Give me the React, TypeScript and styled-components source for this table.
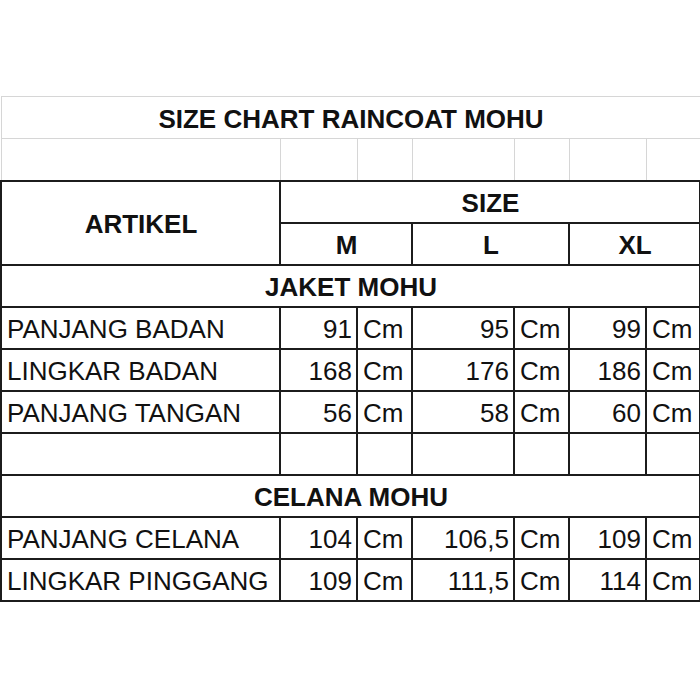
import React, { ReactElement } from 'react';
import styled, { createGlobalStyle } from 'styled-components';

const GlobalStyle = createGlobalStyle`
  html, body {
    margin: 0;
    padding: 0;
    background: #fff;
  }
  body {
    font-family: "Liberation Sans", Arial, sans-serif;
    color: #111;
  }
`;

const Page = styled.div`
  width: 700px;
  padding-top: 96px;
`;

const Table = styled.table`
  border-collapse: collapse;
  table-layout: fixed;
  width: 699px;
  font-size: 26px;
  line-height: 1;
`;

const Row = styled.tr`
  height: 42px;
`;

const Cell = styled.td<{ $align?: 'left' | 'right' | 'center'; $bold?: boolean; $light?: boolean }>`
  border: ${(p) => (p.$light ? '1px solid #d6d6d6' : '2px solid #1c1c1c')};
  padding: 3px 4px 0 5px;
  text-align: ${(p) => p.$align || 'left'};
  font-weight: ${(p) => (p.$bold ? 700 : 400)};
  vertical-align: middle;
  white-space: nowrap;
  overflow: hidden;
`;

const columns = [279, 77, 55, 102, 55, 77, 54];

type Measure = { label: string; m: string; l: string; xl: string };

const jaket: Measure[] = [
  { label: 'PANJANG BADAN', m: '91', l: '95', xl: '99' },
  { label: 'LINGKAR BADAN', m: '168', l: '176', xl: '186' },
  { label: 'PANJANG TANGAN', m: '56', l: '58', xl: '60' },
];

const celana: Measure[] = [
  { label: 'PANJANG CELANA', m: '104', l: '106,5', xl: '109' },
  { label: 'LINGKAR PINGGANG', m: '109', l: '111,5', xl: '114' },
];

function MeasureRow({ item }: { item: Measure }): ReactElement {
  return (
    <Row>
      <Cell>{item.label}</Cell>
      {[item.m, item.l, item.xl].map((v, i) => (
        <React.Fragment key={i}>
          <Cell $align="right">{v}</Cell>
          <Cell>Cm</Cell>
        </React.Fragment>
      ))}
    </Row>
  );
}

export default function App(): ReactElement {
  return (
    <Page>
      <GlobalStyle />
      <Table>
        <colgroup>
          {columns.map((w, i) => (
            <col key={i} style={{ width: w }} />
          ))}
        </colgroup>
        <tbody>
          <Row>
            <Cell colSpan={7} $align="center" $bold $light>
              SIZE CHART RAINCOAT MOHU
            </Cell>
          </Row>
          <Row>
            {columns.map((_, i) => (
              <Cell key={i} $light />
            ))}
          </Row>
          <Row>
            <Cell rowSpan={2} $align="center" $bold>
              ARTIKEL
            </Cell>
            <Cell colSpan={6} $align="center" $bold>
              SIZE
            </Cell>
          </Row>
          <Row>
            <Cell colSpan={2} $align="center" $bold>M</Cell>
            <Cell colSpan={2} $align="center" $bold>L</Cell>
            <Cell colSpan={2} $align="center" $bold>XL</Cell>
          </Row>
          <Row>
            <Cell colSpan={7} $align="center" $bold>
              JAKET MOHU
            </Cell>
          </Row>
          {jaket.map((item) => (
            <MeasureRow key={item.label} item={item} />
          ))}
          <Row>
            {columns.map((_, i) => (
              <Cell key={i} />
            ))}
          </Row>
          <Row>
            <Cell colSpan={7} $align="center" $bold>
              CELANA MOHU
            </Cell>
          </Row>
          {celana.map((item) => (
            <MeasureRow key={item.label} item={item} />
          ))}
        </tbody>
      </Table>
    </Page>
  );
}
